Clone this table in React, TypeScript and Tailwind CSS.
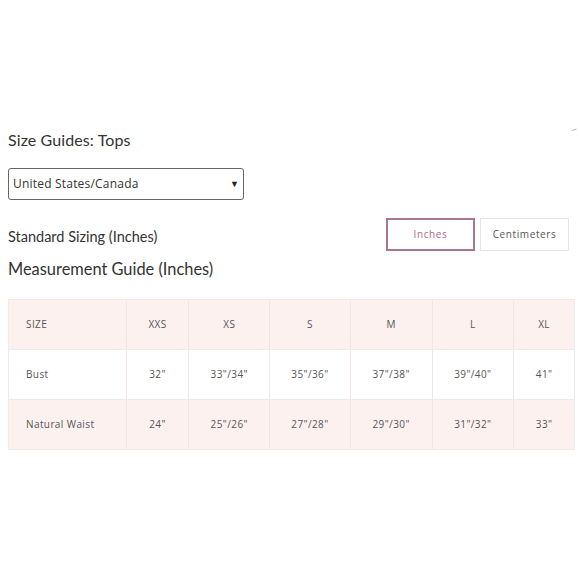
import React from "react";

const sizes = ["XXS", "XS", "S", "M", "L", "XL"];
const rows = [
  { label: "Bust", values: ['32"', '33"/34"', '35"/36"', '37"/38"', '39"/40"', '41"'], bg: "bg-white" },
  { label: "Natural Waist", values: ['24"', '25"/26"', '27"/28"', '29"/30"', '31"/32"', '33"'], bg: "bg-[#fdf1f0]" },
];
const widths = ["w-[118px]", "w-[63px]", "w-[81px]", "w-[81px]", "w-[82px]", "w-[82px]", "w-[60px]"];

export default function App() {
  return (
    <div className="w-[580px] h-[580px] bg-white relative font-['Lato',sans-serif] text-[#333]">
      <span className="absolute left-[573px] top-[125px] text-[6px] text-[#666] rotate-45">/</span>
      <div className="pt-[130px] pl-2">
        <h1 className="text-[16px] leading-5 text-[#333] tracking-[0.1px]">Size Guides: Tops</h1>
        <div className="mt-[18px] w-[236px] h-[32px] border border-[#666] rounded-[3px] flex items-center justify-between pl-[4px] pr-[4px]">
          <span className="text-[12px] text-[#333] font-['Open_Sans',sans-serif] tracking-[0.2px]">United States/Canada</span>
          <span className="text-[9px] text-[#222]">▼</span>
        </div>
        <div className="mt-[18px] flex items-center pr-[11px]">
          <div className="text-[14.5px] flex-1 pt-[4px]">Standard Sizing (Inches)</div>
          <div className="w-[89px] h-[33px] border-2 border-[#a87593] flex items-center justify-center text-[10px] text-[#a86d8e] tracking-[0.6px] font-['Open_Sans',sans-serif]">Inches</div>
          <div className="ml-[5px] w-[89px] h-[33px] border border-[#e5e5e5] flex items-center justify-center text-[10px] text-[#555] tracking-[0.6px] font-['Open_Sans',sans-serif]">Centimeters</div>
        </div>
        <h2 className="mt-[8px] text-[16.4px] leading-5">Measurement Guide (Inches)</h2>
      </div>
      <div className="ml-2 mt-[20px] w-[567px] border border-[#f0eaea] font-['Open_Sans',sans-serif] text-[10px] text-[#555] tracking-[0.4px]">
        <div className="flex h-[49px] bg-[#fdf1f0]">
          <div className={`${widths[0]} border-r border-[#f0e6e6] flex items-center pl-[17px]`}>SIZE</div>
          {sizes.map((s, i) => (
            <div key={s} className={`${widths[i + 1]} ${i < 5 ? "border-r border-[#f0e6e6]" : ""} flex items-center justify-center`}>{s}</div>
          ))}
        </div>
        {rows.map((r) => (
          <div key={r.label} className={`flex h-[50px] border-t border-[#efe9e9] ${r.bg}`}>
            <div className={`${widths[0]} border-r border-[#f0e6e6] flex items-center pl-[17px]`}>{r.label}</div>
            {r.values.map((v, i) => (
              <div key={i} className={`${widths[i + 1]} ${i < 5 ? "border-r border-[#f0e6e6]" : ""} flex items-center justify-center`}>{v}</div>
            ))}
          </div>
        ))}
      </div>
    </div>
  );
}
